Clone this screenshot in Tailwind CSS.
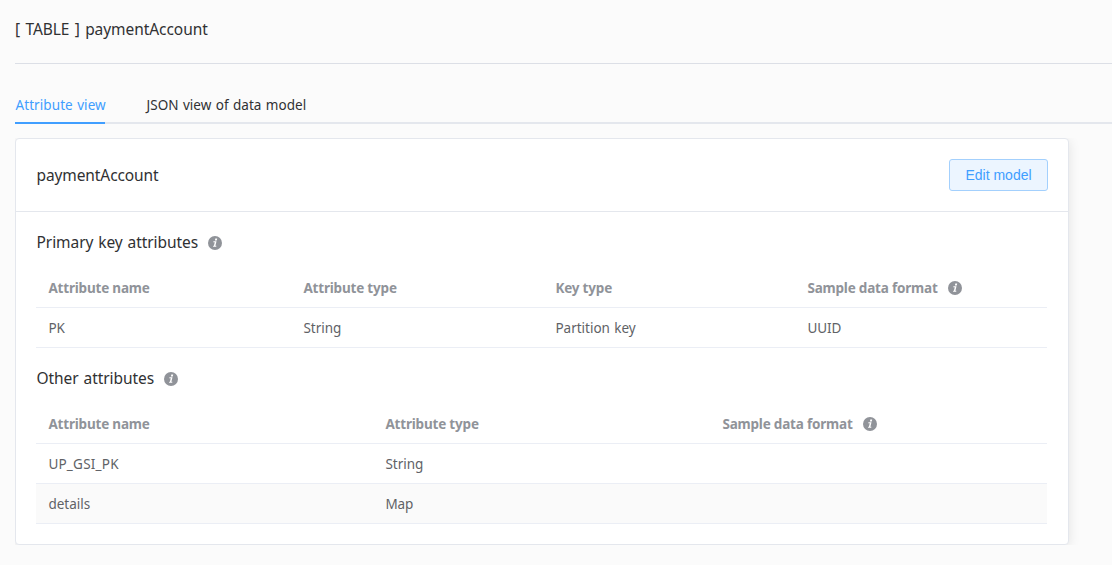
<!DOCTYPE html>
<html lang="en">
<head>
<meta charset="utf-8">
<title>paymentAccount</title>
<script src="https://cdn.jsdelivr.net/npm/@tailwindcss/browser@4"></script>
</head>
<body class="h-[565px] overflow-hidden bg-[#fbfbfb] pl-[15px] font-['Noto_Sans',sans-serif] text-[13.5px] text-[#606266]">
<svg class="hidden"><symbol id="info" viewBox="0 0 14 14"><circle cx="7" cy="7" r="7" fill="#909399"/><path d="M7.3 2.6h1.9l-.4 1.8H6.9zM5.5 5.3h3L7.4 9.8h1l-.2 1H5l.25-1h.65l.85-3.5H5.2z" fill="#fff"/></symbol></svg>
<header class="flex h-16 items-center border-b border-[#dcdfe6] pb-1 text-[15.5px] text-[#303133]"><h1><span class="tracking-[-0.06px] [word-spacing:1.4px]">[ TABLE ] paymentAccount</span></h1></header>
<nav class="mt-[22px] flex h-[38px] gap-10 border-b-2 border-[#e4e7ed] text-[#303133]">
  <a class="h-[38px] w-[90px] border-b-2 border-[#409eff] pl-[0.5px] leading-[38px] tracking-[0.08px] whitespace-nowrap text-[#409eff] [word-spacing:0.8px]">Attribute view</a>
  <a class="pl-[1.5px] leading-[38px] tracking-[0.06px] whitespace-nowrap [word-spacing:0.7px]">JSON view of data model</a>
</nav>
<main class="mt-[14px] h-[407px] overflow-hidden">
  <section class="h-[407px] w-[1054px] rounded border border-[#e4e7ed] bg-white shadow-[0_2px_12px_0_rgba(0,0,0,0.1)]">
    <div class="flex h-[73px] items-center justify-between border-b border-[#e4e7ed] px-5">
      <h2 class="pt-[2px] pl-[0.5px] text-[15.5px] tracking-[-0.1px] text-[#303133]">paymentAccount</h2>
      <button class="h-8 w-[99px] rounded-[3px] border border-[#a3d0fd] bg-[#ecf5ff] font-['Liberation_Sans',Arial,sans-serif] text-sm text-[#409eff]">Edit model</button>
    </div>
    <div class="px-5 pt-[19px]">
      <h3 class="flex h-6 items-center gap-[10px] pl-[0.5px] text-[15.5px] text-[#303133]"><span class="tracking-[-0.06px] [word-spacing:0.9px]">Primary key attributes</span><svg class="size-[14px]"><use href="#info"/></svg></h3>
      <div class="mt-[13px] w-[1011px]">
        <div class="grid h-10 grid-cols-[255px_252px_252px_252px] items-center border-b border-[#ebeef5] pt-[2px] pl-[12.4px] font-bold tracking-[-0.19px] text-[#909399]">
          <span>Attribute name</span><span>Attribute type</span><span>Key type</span><span class="flex items-center gap-[10px]"><span>Sample data format</span><svg class="mb-[2px] size-[14px]"><use href="#info"/></svg></span>
        </div>
        <div class="grid h-10 grid-cols-[255px_252px_252px_252px] items-center border-b border-[#ebeef5] pt-[2px] pl-[12.4px]">
          <span>PK</span><span>String</span><span class="[word-spacing:0.8px]">Partition key</span><span class="tracking-[-0.1px]">UUID</span>
        </div>
      </div>
      <h3 class="mt-[19px] flex h-6 items-center gap-[10px] pl-[0.5px] text-[15.5px] text-[#303133]"><span class="tracking-[-0.06px] [word-spacing:0.9px]">Other attributes</span><svg class="size-[14px]"><use href="#info"/></svg></h3>
      <div class="mt-[13px] w-[1011px]">
        <div class="grid h-10 grid-cols-[337px_337px_337px] items-center border-b border-[#ebeef5] pt-[2px] pl-[12.4px] font-bold tracking-[-0.19px] text-[#909399]">
          <span>Attribute name</span><span>Attribute type</span><span class="flex items-center gap-[10px]"><span>Sample data format</span><svg class="mb-[2px] size-[14px]"><use href="#info"/></svg></span>
        </div>
        <div class="grid h-10 grid-cols-[337px_337px_337px] items-center border-b border-[#ebeef5] pt-[2px] pl-[12.4px]"><span class="tracking-[0.22px]">UP_GSI_PK</span><span>String</span></div>
        <div class="grid h-10 grid-cols-[337px_337px_337px] items-center border-b border-[#ebeef5] bg-[#fafafa] pt-[2px] pl-[12.4px]"><span>details</span><span class="tracking-[-0.1px]">Map</span></div>
      </div>
    </div>
  </section>
</main>
</body>
</html>
